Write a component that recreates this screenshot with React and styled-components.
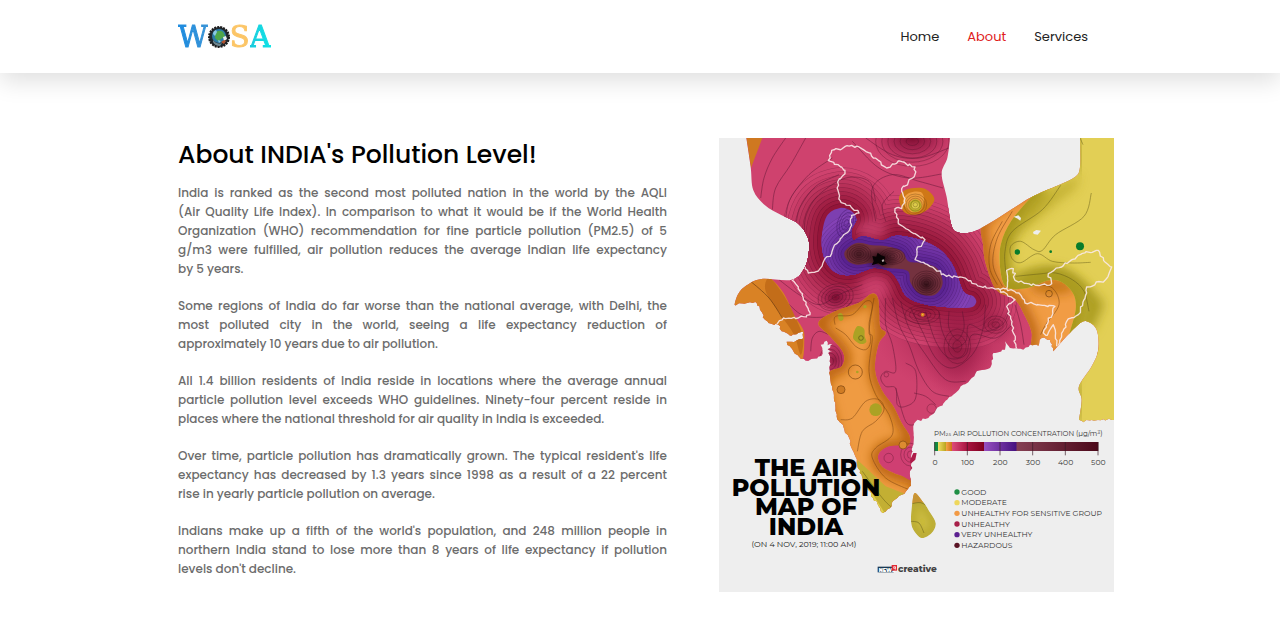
import React from "react";
import styled, { createGlobalStyle } from "styled-components";

const GlobalStyle = createGlobalStyle`
  * { box-sizing: border-box; }
  body { margin: 0; background: #fff; color: #000; font-family: Poppins, Inter, sans-serif; }
`;

const Header = styled.header`
  position: relative;
  background: #fff;
  box-shadow: 0 8px 24px rgba(0, 0, 0, 0.13);
`;
const HeaderInner = styled.div`
  width: 100%;
  max-width: 924px;
  height: 73px;
  margin: 0 auto;
  display: flex;
  align-items: center;
  justify-content: space-between;
`;
const Logo = styled.a`
  display: flex;
  align-items: center;
  font: 29px/32px "DejaVu Serif", serif;
  text-decoration: none;
`;
const LogoLetter = styled.span`
  background: ${(p) => p.$fill};
  background-clip: text;
  -webkit-text-stroke: 1px transparent;
  color: transparent;
`;
const Globe = styled.svg`
  width: 24px;
  height: 24px;
  margin: 0 -1px;
`;
const Nav = styled.nav`
  display: flex;
`;
const NavLink = styled.a`
  padding: 8px 14px;
  font-size: 13px;
  line-height: 20px;
  text-decoration: none;
  color: ${(p) => (p.$active ? "#e0201b" : "#222")};
`;
const Page = styled.div`
  padding-left: 12px;
`;
const Section = styled.main`
  width: 100%;
  max-width: 936px;
  margin: 0 auto;
  padding: 65px 0 26px;
  display: grid;
  grid-template-columns: minmax(0, 489fr) minmax(0, 395fr);
  gap: 52px;
`;
const Copy = styled.article`
  display: flex;
  flex-direction: column;
  gap: 18px;
`;
const Title = styled.h1`
  margin: 0 0 -7px;
  font-size: 25px;
  line-height: 34px;
  font-weight: 500;
`;
const Paragraph = styled.p`
  margin: 0;
  font-size: 12px;
  line-height: 19px;
  font-weight: 500;
  color: #6c6c6c;
`;
const Line = styled.span`
  display: block;
  text-align: justify;
  text-align-last: justify;

  &:last-child {
    text-align-last: left;
  }
`;
const MapPicture = styled.svg`
  display: block;
  width: 100%;
  height: auto;
  font-family: Montserrat, Inter, sans-serif;
`;

const PARAGRAPHS = [
  [
    "India is ranked as the second most polluted nation in the world by the AQLI",
    "(Air Quality Life Index). In comparison to what it would be if the World Health",
    "Organization (WHO) recommendation for fine particle pollution (PM2.5) of 5",
    "g/m3 were fulfilled, air pollution reduces the average Indian life expectancy",
    "by 5 years.",
  ],
  [
    "Some regions of India do far worse than the national average, with Delhi, the",
    "most polluted city in the world, seeing a life expectancy reduction of",
    "approximately 10 years due to air pollution.",
  ],
  [
    "All 1.4 billion residents of India reside in locations where the average annual",
    "particle pollution level exceeds WHO guidelines. Ninety-four percent reside in",
    "places where the national threshold for air quality in India is exceeded.",
  ],
  [
    "Over time, particle pollution has dramatically grown. The typical resident's life",
    "expectancy has decreased by 1.3 years since 1998 as a result of a 22 percent",
    "rise in yearly particle pollution on average.",
  ],
  [
    "Indians make up a fifth of the world's population, and 248 million people in",
    "northern India stand to lose more than 8 years of life expectancy if pollution",
    "levels don't decline.",
  ],
];

// Turns "x,y x,y ..." into a list of points.
const pts = (s) => s.trim().split(/\s+/).map((p) => p.split(",").map(Number));

// Catmull-Rom curve through the points.
function smooth(s, closed = true) {
  const p = pts(s);
  const n = p.length;
  const at = (i) => (closed ? p[(i + n) % n] : p[Math.max(0, Math.min(n - 1, i))]);
  let d = `M${p[0]}`;
  for (let i = 0; i < (closed ? n : n - 1); i++) {
    const [a, b, c, e] = [at(i - 1), at(i), at(i + 1), at(i + 2)];
    d += `C${b[0] + (c[0] - a[0]) / 6},${b[1] + (c[1] - a[1]) / 6} ${c[0] - (e[0] - b[0]) / 6},${c[1] - (e[1] - b[1]) / 6} ${c}`;
  }
  return closed ? d + "Z" : d;
}

// Ragged line for coasts and borders: each leg is split and nudged sideways.
function ragged(s, amp = 4) {
  const p = pts(s);
  let seed = 7;
  const rnd = () => {
    seed = (seed * 16807) % 2147483647;
    return seed / 2147483647 - 0.5;
  };
  let d = `${p[0]}`;
  for (let i = 1; i < p.length; i++) {
    const [a, b] = [p[i - 1], p[i]];
    const steps = Math.max(1, Math.round(Math.hypot(b[0] - a[0], b[1] - a[1]) / 8));
    for (let k = 1; k < steps; k++) {
      const t = k / steps;
      d += ` L${(a[0] + (b[0] - a[0]) * t + rnd() * amp * 2).toFixed(1)},${(a[1] + (b[1] - a[1]) * t + rnd() * amp * 2).toFixed(1)}`;
    }
    d += ` L${b}`;
  }
  return d;
}

const open = (s) => smooth(s, false).slice(1);
const LAND =
  `M${open("82,0 95,87 103,157 138,202 188,232 238,257 266,297 270,337 258,387 220,425 128,423 83,442 58,467 46,500")}` +
  ` L${ragged("46,500 93,493 113,495 123,515 138,545 148,555 178,560 188,580 218,593 253,583 250,603 225,612 203,611")}` +
  ` L${ragged("203,611 223,640 245,662 268,669 308,653 310,630 305,620 323,608 326,622 340,618 326,634 340,640 328,645 333,655 331,705 340,755 353,835 388,895 400,935 428,1010 445,1045 463,1080 491,1125 513,1110 521,1090 548,1070 576,1043 572,1005 581,925 583,875 591,850 628,840 663,805 698,775 758,720 773,700 813,690 823,645 858,635 858,610 873,630 913,635 933,620 958,623 968,600 993,605 1003,640", 3)}` +
  ` L${open("1003,640 1038,600 1078,560 1103,550 1133,575 1138,635 1118,685 1080,745 1088,785 1080,845")}` +
  ` L${ragged("1080,845 1090,850 1118,846 1185,846", 4)} L1185,0 L1083,0` +
  ` L${open("1083,0 1083,87 1068,117 1018,142 938,177 878,214 818,252 758,283 713,282 696,257 683,177 668,107 685,60 693,0")}Z`;

const PURPLE = smooth("398,220 363,210 323,235 308,305 318,365 353,405 403,410 463,390 513,400 538,430 563,475 623,500 743,510 771,495 763,475 733,460 703,385 663,335 603,305 533,293 488,307 433,295 403,307 398,275 412,245");
const BROWN = smooth("378,340 413,315 460,322 503,325 548,340 568,370 603,375 653,390 671,435 648,470 603,467 575,435 565,398 503,390 463,375 413,380 383,365");
const WEST = smooth("298,555 348,520 418,495 458,467 478,485 483,565 500,585 478,620 468,695 488,755 523,805 548,855 572,895 565,925 513,925 478,950 488,985 530,1008 590,1030 590,1090 500,1130 420,1110 320,800 325,710 368,685 373,645 333,595");
const EAST = smooth("798,240 793,327 803,387 833,457 888,485 918,535 938,585 943,660 1060,650 1200,600 1200,200 950,150");
const YELLOW = `M${open("943,170 878,247 846,317 843,387 862,447 925,450 988,427 1028,432 1063,467 1070,515 1050,590")} L1000,900 L1300,950 L1300,-100 L900,-100Z`;
const ISLAND = smooth("588,1065 613,1093 628,1115 650,1155 638,1185 608,1200 583,1175 576,1145 580,1095");

const mix = (a, b, t) => `rgb(${a.map((v, i) => Math.round(v + (b[i] - v) * t)).join()})`;
const PINK = [207, 66, 110];
const CRIMSON = [140, 16, 50];

// Rings growing out of one shape, darkest next to it.
function Halo({ d, reach, step, from = PINK, to = CRIMSON, line = 0.45 }) {
  const rings = [];
  for (let w = reach; w > 0; w -= step) rings.push(w);
  return rings.map((w) => {
    const tone = Math.pow(1 - w / reach, 1.1);
    const fill = from.map((v, i) => v + (to[i] - v) * tone);
    return (
      <g key={w} fill="none" strokeLinejoin="round">
        <path d={d} stroke={mix(fill, [20, 0, 20], line)} strokeWidth={w * 2 + 3} />
        <path d={d} stroke={mix(from, to, tone)} strokeWidth={w * 2} />
      </g>
    );
  });
}

// Nested closed contour lines round a centre.
function Rings({ x, y, rx, ry, n, turn = 0, color = "#4a1026" }) {
  return Array.from({ length: n }, (_, i) => {
    const t = (i + 1) / n;
    return (
      <ellipse key={i} cx={x} cy={y} rx={rx * t} ry={ry * t} fill="none" stroke={color}
        strokeWidth="1.6" opacity="0.6" transform={`rotate(${turn} ${x} ${y})`} />
    );
  });
}

const Contours = ({ lines, color = "#561430" }) => (
  <g fill="none" stroke={color} strokeWidth="1.8" opacity="0.75">
    {lines.map((l) => <path key={l} d={smooth(l, false)} />)}
  </g>
);

const PINK_LINES = [
  "200,0 160,60 135,120 125,180",
  "260,0 215,80 170,150 160,215",
  "340,60 270,110 215,180 200,238",
  "360,110 290,145 245,205 232,250",
  "470,190 450,130 380,120 300,170 262,230 256,285",
  "440,0 520,50 600,60 690,30",
  "400,10 480,90 570,120 668,108",
  "470,250 460,150 520,110 600,130 672,150",
  "500,250 490,200 525,160",
  "130,425 200,490 260,535 350,530 400,490",
  "180,425 240,470 300,500 360,470 430,440",
  "275,640 280,600 300,580 330,590",
  "500,480 500,560 520,620 530,700 500,700 485,720 500,745 530,750 535,800 560,805 590,780 590,700 560,675",
  "520,480 540,560 570,620 600,700 640,760 690,775",
  "545,490 570,570 620,650 680,725 740,730",
  "575,510 610,580 650,660 700,690 760,650 790,580 800,500",
  "620,520 650,610 690,660 740,650 760,590 830,600 880,560",
  "660,520 670,580 700,630 740,610 750,560 800,580 850,560 870,520",
  "690,520 690,570 715,605 735,570 730,520",
  "585,765 620,775 650,800",
  "530,750 560,850 590,860",
  "888,500 905,560 915,620",
];
const ORANGE_LINES = [
  "348,560 350,535 400,530 440,490 460,500 450,560 455,610 440,635 410,625 380,590 350,570",
  "465,480 450,580 460,600 450,700 470,770 510,830 520,890 470,930 460,960 500,1020 570,1055",
  "365,845 400,840 440,790 480,785 495,815 470,850 430,880 415,940",
  "850,250 815,320 812,390 835,440",
  "880,220 835,300 822,380 850,445",
  "950,440 1000,450 1020,500 980,560 965,590",
];
const YELLOW_LINES = [
  "1025,142 970,215 880,280 858,340 860,400",
  "1117,165 1095,235 1010,290 970,337 945,335 905,310 875,325 878,360 905,374 955,347 1000,370 1060,375 1115,373",
  "890,415 960,408 1010,405 1060,425 1095,460 1110,520",
  "1083,0 1092,20",
];
const BORDERS = [
  "173,560 193,540 238,540 273,530 253,480 238,447 220,427 258,387 268,405 298,399 318,362 338,347 353,317 373,292 398,262 398,232 420,225 393,202 363,187 356,132 378,107 368,87 328,67 338,37 398,22 428,32 478,67 503,90 538,69 588,87 585,117 568,132 548,152 558,182 548,212 528,212 538,257 588,287 618,305 593,335 588,365 633,385 683,415 723,417 783,445 843,455 863,452 863,397 883,392 888,427 938,442 998,437 988,407 1028,387 1088,347 1138,337 1158,372 1178,387 1158,427 1103,447 1103,465 1078,530 1043,550 1018,630",
  "843,455 888,485 863,505 878,555 893,635",
  "863,452 900,465 918,495 1008,505 988,550 973,585 985,592 1003,560 1013,625",
];
const LEGEND = [
  ["GOOD", "#1f8f45"],
  ["MODERATE", "#eed75c"],
  ["UNHEALTHY FOR SENSITIVE GROUP", "#f29a45"],
  ["UNHEALTHY", "#a82049"],
  ["VERY UNHEALTHY", "#5c2191"],
  ["HAZARDOUS", "#5a1425"],
];

function PollutionMap() {
  return (
    <MapPicture viewBox="0 0 1185 1362" role="img" aria-label="Air pollution map of India">
      <defs>
        <clipPath id="land"><path d={LAND} /></clipPath>
        <clipPath id="west"><path d={WEST} /></clipPath>
        <clipPath id="east"><path d={EAST} /></clipPath>
        <clipPath id="yellow"><path d={YELLOW} /></clipPath>
        <clipPath id="purple"><path d={PURPLE} /></clipPath>
        <clipPath id="island"><path d={ISLAND} /></clipPath>
        <filter id="soft" x="-50%" y="-50%" width="200%" height="200%"><feGaussianBlur stdDeviation="16" /></filter>
        <radialGradient id="dark"><stop offset="0" stopColor="#7d0c30" /><stop offset="0.5" stopColor="#9c1c48" stopOpacity="0.7" /><stop offset="1" stopColor="#b52a58" stopOpacity="0" /></radialGradient>
        <radialGradient id="soot"><stop offset="0" stopColor="#180408" /><stop offset="1" stopColor="#35101c" stopOpacity="0" /></radialGradient>
        <linearGradient id="scale">
          <stop offset="0" stopColor="#128a41" /><stop offset="0.022" stopColor="#128a41" />
          <stop offset="0.024" stopColor="#f0de63" /><stop offset="0.07" stopColor="#b9a521" />
          <stop offset="0.072" stopColor="#f5a247" /><stop offset="0.108" stopColor="#cb7115" />
          <stop offset="0.11" stopColor="#dc4a79" /><stop offset="0.2" stopColor="#a81440" /><stop offset="0.3" stopColor="#80001f" />
          <stop offset="0.302" stopColor="#9750c0" /><stop offset="0.5" stopColor="#45117f" />
          <stop offset="0.502" stopColor="#854054" /><stop offset="1" stopColor="#4b0719" />
        </linearGradient>
      </defs>
      <rect width="1185" height="1362" fill="#eee" />

      <g clipPath="url(#land)">
        <rect width="1185" height="1362" fill="#cf426e" />
        <ellipse cx="690" cy="560" rx="230" ry="200" fill="url(#dark)" opacity="0.6" />
        <Halo d={PURPLE} reach={120} step={12} line={0.22} />
        <ellipse cx="580" cy="0" rx="130" ry="80" fill="url(#dark)" />
        <Rings x={580} y={10} rx={110} ry={75} n={6} />
        <ellipse cx="715" cy="625" rx="110" ry="160" fill="url(#dark)" opacity="0.7" />
        <Rings x={715} y={625} rx={40} ry={52} n={3} />
        <ellipse cx="825" cy="560" rx="80" ry="60" fill="url(#dark)" opacity="0.5" />
        <Rings x={830} y={560} rx={34} ry={26} n={3} />
        <ellipse cx="350" cy="478" rx="60" ry="45" fill="url(#dark)" />
        <Rings x={350} y={478} rx={54} ry={40} n={5} turn={-15} />
        <ellipse cx="345" cy="665" rx="45" ry="60" fill="url(#dark)" opacity="0.7" />
        <Rings x={335} y={670} rx={34} ry={48} n={4} />
        <ellipse cx="457" cy="275" rx="46" ry="30" fill="#c9436d" opacity="0.8" filter="url(#soft)" />
        <ellipse cx="465" cy="450" rx="46" ry="40" fill="#cf426e" opacity="0.8" filter="url(#soft)" />
        <Rings x={610} y={530} rx={52} ry={28} n={4} />
        <Rings x={502} y={710} rx={7} ry={7} n={1} />
        <Rings x={638} y={812} rx={14} ry={14} n={1} />
        <Contours lines={PINK_LINES} />

        <path d="M82,0 L130,0 L96,90Z" fill="#cf7820" />
        <path d={smooth("30,520 60,420 140,415 190,460 225,530 250,570 256,600 245,670 180,620 90,520")} fill="#d98225" />
        <path d={smooth("150,420 190,465 230,540 252,600 245,650 225,590 185,530 140,460")} fill="#bd6817" opacity="0.8" />
        <path d={smooth("95,430 150,480 190,540", false)} fill="none" stroke="#693d13" strokeWidth="2" />

        <path d={WEST} fill="#ef9b42" />
        <g clipPath="url(#west)">
          <path d={WEST} fill="none" stroke="#b96209" strokeWidth="38" filter="url(#soft)" />
          <path d="M415,965 L500,1045 L590,1080 L520,1180 L420,1120Z" fill="#c3af33" />
          <path d="M420,1055 L450,1050 L500,1130 L450,1130Z" fill="#e0d04e" />
          <Contours lines={["430,1000 490,1080 520,1110"]} color="#5b5215" />
        </g>
        <path d={smooth("480,948 512,925 568,926 600,945 590,1026 535,1006 492,982")} fill="#cf3f72" />
        <Rings x={509} y={960} rx={14} ry={14} n={1} />
        <Rings x={575} y={950} rx={30} ry={34} n={3} />
        <ellipse cx="365" cy="537" rx="8" ry="12" fill="#aba224" transform="rotate(-15 365 537)" />
        <path d={smooth("403,590 415,565 435,572 437,595 442,612 425,618 405,605")} fill="#aba224" />
        <circle cx="426" cy="600" r="7" fill="none" stroke="#5a5515" strokeWidth="2" />
        <circle cx="409" cy="702" r="21" fill="none" stroke="#7b4510" strokeWidth="2" />
        <circle cx="415" cy="702" r="4" fill="#aba224" />
        <circle cx="438" cy="506" r="5" fill="#aba224" />
        <circle cx="366" cy="755" r="12" fill="#cf7c25" stroke="#7b4510" strokeWidth="2" />
        <circle cx="470" cy="815" r="19" fill="#aba224" />
        <circle cx="552" cy="921" r="12" fill="#dc8b30" stroke="#7b4510" strokeWidth="2" />

        <path d={EAST} fill="#f19c44" />
        <g clipPath="url(#east)">
          <path d={EAST} fill="none" stroke="#bd6812" strokeWidth="40" filter="url(#soft)" />
          <ellipse cx="1000" cy="445" rx="70" ry="24" fill="#c77719" filter="url(#soft)" />
        </g>
        <path d={YELLOW} fill="#e2cf55" />
        <g clipPath="url(#yellow)">
          <path d={YELLOW} fill="none" stroke="#a8981a" strokeWidth="70" filter="url(#soft)" />
          <path d="M943,177 L1083,110 L1070,150 L930,260 L870,300Z" fill="#b7a627" filter="url(#soft)" opacity="0.7" />
          <path d="M900,430 Q1020,370 1130,500 L1100,570" fill="none" stroke="#aa9c22" strokeWidth="44" filter="url(#soft)" />
          <path d="M1085,0 V100 M1080,730 V850" stroke="#b8a730" strokeWidth="24" filter="url(#soft)" />
        </g>
        <Contours lines={ORANGE_LINES} color="#69370c" />
        <Contours lines={YELLOW_LINES} color="#5b5215" />
        <circle cx="990" cy="467" r="10" fill="none" stroke="#70400f" strokeWidth="2" />
        <circle cx="895" cy="342" r="8" fill="#087c2b" />
        <circle cx="995" cy="341" r="4" fill="#087c2b" />
        <circle cx="1083" cy="325" r="12" fill="#087c2b" />
        <path d="M884,236 l14,-4 l8,8 l-2,8 l-8,-6z M942,282 l10,-6 l14,2 l-10,12 l-12,-2z" fill="#eee" />

        <path d={smooth("540,180 560,155 610,150 640,170 645,190 625,215 590,230 555,222")} fill="#cf7817" />
        <path d={smooth("552,190 570,165 605,162 615,185 605,215 575,222")} fill="#ee9d3e" />
        <circle cx="589" cy="203" r="19" fill="#bcb12a" />
        <circle cx="589" cy="203" r="11" fill="#dccc4a" />
        <Rings x={589} y={200} rx={34} ry={32} n={5} color="#5a3c10" />
        <circle cx="611" cy="530" r="6" fill="#df7c20" />
        <circle cx="611" cy="530" r="2" fill="#e7d24d" />

        <path d={PURPLE} fill="#7d3fb0" />
        <g clipPath="url(#purple)">
          <Halo d={BROWN} reach={90} step={9} from={[132, 66, 182]} to={[84, 30, 140]} line={0.2} />
          <Rings x={382} y={255} rx={26} ry={44} n={4} turn={20} color="#2d0b55" />
        </g>
        <path d={BROWN} fill="#74323f" />
        <ellipse cx="420" cy="350" rx="48" ry="36" fill="url(#soot)" opacity="0.5" />
        <ellipse cx="485" cy="362" rx="56" ry="36" fill="url(#soot)" />
        <ellipse cx="622" cy="440" rx="42" ry="36" fill="url(#soot)" opacity="0.7" />
        <Rings x={420} y={348} rx={36} ry={28} n={5} color="#2c0913" />
        <Rings x={520} y={355} rx={38} ry={24} n={5} color="#2c0913" />
        <Rings x={622} y={435} rx={42} ry={36} n={6} color="#2c0913" />
        <path d="M460,354 l12,2 l4,-12 l10,8 l12,4 l-2,12 l8,10 l-14,4 l-12,-6 l-20,6 l6,-12z" fill="#070203" />
        <path d="M488,366 l6,-2 l2,6 l-6,2z" fill="#b8a8a8" />
        <g fill="none" stroke="#fae9e8" strokeWidth="4" strokeLinejoin="round" opacity="0.9">
          {BORDERS.map((b) => <path key={b} d={`M${ragged(b, 4)}`} />)}
        </g>
      </g>

      <g clipPath="url(#island)">
        <path d={ISLAND} fill="#cfbf42" />
        <path d="M570,1040 h80 v58 q-40,-10 -80,0z" fill="#ec9344" />
        <path d={ISLAND} fill="none" stroke="#a39523" strokeWidth="16" filter="url(#soft)" />
        <Contours lines={["576,1098 605,1094 635,1110", "576,1150 600,1155 615,1185"]} color="#5b5215" />
      </g>
      <path d="M583,945 l-10,22 l2,10 l14,-12 l4,-20z M574,980 l6,10 l-6,8z" fill="#ae1c49" />

      <text fontSize="72" fontWeight="800" textAnchor="middle">
        <tspan x="261" y="1015">THE AIR</tspan>
        <tspan x="261" y="1073">POLLUTION</tspan>
        <tspan x="261" y="1132">MAP OF</tspan>
        <tspan x="261" y="1190">INDIA</tspan>
      </text>
      <text x="255" y="1227" fontSize="24" textAnchor="middle" fill="#222">(ON 4 NOV, 2019; 11:00 AM)</text>

      <text x="645" y="894" fontSize="21" fill="#333">PM<tspan fontSize="12">2.5</tspan> AIR POLLUTION CONCENTRATION (μg/m³)</text>
      <rect x="646" y="912" width="492" height="27" fill="url(#scale)" />
      {[0, 100, 200, 300, 400, 500].map((v, i) => (
        <g key={v} fontSize="23" textAnchor="middle" fill="#333">
          <path d={`M${647 + i * 98},912 V952`} stroke="#3a1a26" strokeWidth="2" />
          <text x={648 + i * 98} y="980">{v}</text>
        </g>
      ))}
      {LEGEND.map(([label, color], i) => (
        <g key={label} fontSize="23" fill="#333">
          <circle cx="714" cy={1062 + i * 32} r="8" fill={color} />
          <text x="727" y={1070 + i * 32}>{label}</text>
        </g>
      ))}

      <rect x="476" y="1286" width="48" height="17" fill="#1c3b56" />
      <text x="479" y="1301" fontSize="15" fontWeight="900" fill="#fff">NEWS</text>
      <rect x="518" y="1281" width="16" height="17" fill="#e02a35" />
      <path d="M524,1286 h5 v5 h-5z M529,1286 v9" fill="none" stroke="#fff" strokeWidth="2" />
      <text x="537" y="1302" fontSize="27" fontWeight="800" fill="#444">creative</text>
    </MapPicture>
  );
}

function GlobeMark() {
  return (
    <Globe viewBox="0 0 24 24" aria-hidden="true">
      <circle cx="12" cy="12" r="10" fill="#232a30" stroke="#1c1c1c" strokeWidth="2" strokeDasharray="2 1" />
      <circle cx="12" cy="11" r="7" fill="#2b7da8" />
      <path d="M8 8q4-4 8-1l2 4-4 3-3 2-3-3z" fill="#4fa64a" />
      <path d="M6 9q0-3 3-4l1 2-2 4zM11 15l3 1-2 2z" fill="#8bc9e3" />
      <path d="M16 12l3-1 1 3-3 2z" fill="#e6edf0" />
      <path d="M14 17l3-2 2 1-2 3z" fill="#b3532e" />
      <path d="M6 15q4 5 9 3l-2 3q-5 0-7-4z" fill="#6f8790" />
    </Globe>
  );
}

export default function App() {
  return (
    <>
      <GlobalStyle />
      <Header>
        <HeaderInner>
          <Logo href="#home" aria-label="WOSA">
            <LogoLetter $fill="linear-gradient(90deg, #1b8be0, #3a94d6)">W</LogoLetter>
            <GlobeMark />
            <LogoLetter $fill="#fcc566">S</LogoLetter>
            <LogoLetter $fill="linear-gradient(90deg, #19c9dc, #0fe3e6)">A</LogoLetter>
          </Logo>
          <Nav>
            <NavLink href="#home">Home</NavLink>
            <NavLink href="#about" $active>About</NavLink>
            <NavLink href="#services">Services</NavLink>
          </Nav>
        </HeaderInner>
      </Header>
      <Page>
        <Section>
          <Copy>
            <Title>About INDIA's Pollution Level!</Title>
            {PARAGRAPHS.map((lines) => (
              <Paragraph key={lines[0]}>
                {lines.map((line) => <Line key={line}>{line} </Line>)}
              </Paragraph>
            ))}
          </Copy>
          <PollutionMap />
        </Section>
      </Page>
    </>
  );
}
